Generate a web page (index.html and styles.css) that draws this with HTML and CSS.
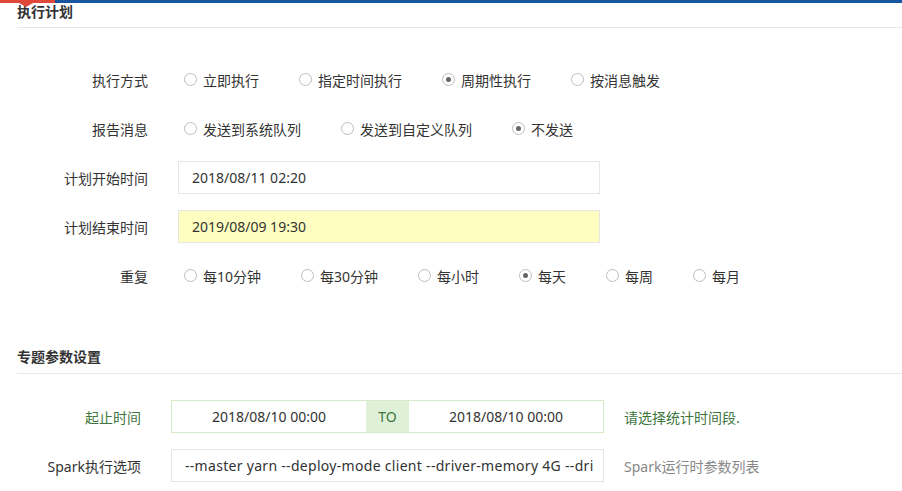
FILE: index.html
```html
<!DOCTYPE html>
<html lang="zh-CN">
<head>
<meta charset="utf-8">
<title>执行计划</title>
<link rel="stylesheet" href="styles.css">
</head>
<body>
<div class="topbar"><span class="topbar-active"></span></div>

<h2 class="section-title first">执行计划</h2>

<div class="form form-plan">
  <div class="row">
    <div class="label">执行方式</div>
    <div class="radios">
      <span class="radio"><span class="dot"></span>立即执行</span>
      <span class="radio"><span class="dot"></span>指定时间执行</span>
      <span class="radio"><span class="dot checked"></span>周期性执行</span>
      <span class="radio"><span class="dot"></span>按消息触发</span>
    </div>
  </div>
  <div class="row">
    <div class="label">报告消息</div>
    <div class="radios">
      <span class="radio"><span class="dot"></span>发送到系统队列</span>
      <span class="radio"><span class="dot"></span>发送到自定义队列</span>
      <span class="radio"><span class="dot checked"></span>不发送</span>
    </div>
  </div>
  <div class="row">
    <div class="label">计划开始时间</div>
    <div class="input">2018/08/11 02:20</div>
  </div>
  <div class="row">
    <div class="label">计划结束时间</div>
    <div class="input input-yellow">2019/08/09 19:30</div>
  </div>
  <div class="row">
    <div class="label">重复</div>
    <div class="radios">
      <span class="radio"><span class="dot"></span>每10分钟</span>
      <span class="radio"><span class="dot"></span>每30分钟</span>
      <span class="radio"><span class="dot"></span>每小时</span>
      <span class="radio"><span class="dot checked"></span>每天</span>
      <span class="radio"><span class="dot"></span>每周</span>
      <span class="radio"><span class="dot"></span>每月</span>
    </div>
  </div>
</div>

<h2 class="section-title second">专题参数设置</h2>

<div class="form form-param">
  <div class="row">
    <div class="label label-success">起止时间</div>
    <div class="range">
      <span class="range-field">2018/08/10 00:00</span>
      <span class="range-to">TO</span>
      <span class="range-field">2018/08/10 00:00</span>
    </div>
    <div class="help help-success">请选择统计时间段.</div>
  </div>
  <div class="row">
    <div class="label">Spark执行选项</div>
    <div class="input input-wide">--master yarn --deploy-mode client --driver-memory 4G --dri</div>
    <div class="help">Spark运行时参数列表</div>
  </div>
</div>
</body>
</html>
```

FILE: styles.css
```css
html, body {
  margin: 0;
  padding: 0;
  background: #fff;
}
body {
  font-family: "Noto Sans", "Noto Sans CJK SC", sans-serif;
  font-size: 14px;
  color: #333;
  width: 902px;
  height: 491px;
  overflow: hidden;
}
.topbar {
  position: relative;
  height: 3px;
  background: #1855a0;
}
.topbar-active {
  position: absolute;
  left: 0;
  top: 0;
  width: 55px;
  height: 3px;
  background: #e0493a;
}
.topbar-active::after {
  content: "";
  position: absolute;
  left: 19px;
  top: 3px;
  border-left: 7px solid transparent;
  border-right: 7px solid transparent;
  border-top: 4px solid #e0493a;
}
.section-title {
  margin: 0 0 0 17px;
  font-size: 14px;
  font-weight: bold;
  line-height: 18px;
  color: #333;
  border-bottom: 1px solid #e8e8e8;
}
.section-title.first {
  padding: 0 0 6px 0;
}
.section-title.second {
  margin-top: 56px;
  padding: 0 0 7px 0;
}
.form {
  display: flex;
  flex-direction: column;
  gap: 16px;
}
.form-plan {
  margin-top: 35px;
}
.form-param {
  margin-top: 26px;
}
.row {
  display: flex;
  align-items: center;
  height: 33px;
}
.label {
  width: 148px;
  text-align: right;
  flex: none;
  white-space: nowrap;
}
.form-plan .label {
  margin-right: 30px;
}
.form-param .label {
  width: 141px;
  margin-right: 30px;
}
.label-success {
  color: #3c763d;
}
.radios {
  display: flex;
  align-items: center;
  padding-left: 6px;
}
.radio {
  display: inline-flex;
  align-items: center;
  margin-right: 40px;
  white-space: nowrap;
}
.dot {
  box-sizing: border-box;
  width: 13px;
  height: 13px;
  border: 1px solid #bdbdbd;
  border-radius: 50%;
  margin-right: 6px;
  display: inline-flex;
  align-items: center;
  justify-content: center;
  background: #fff;
}
.dot.checked::after {
  content: "";
  width: 5px;
  height: 5px;
  border-radius: 50%;
  background: #666;
}
.input {
  box-sizing: border-box;
  width: 422px;
  height: 33px;
  border: 1px solid #e6e6e6;
  padding: 0 13px;
  line-height: 31px;
  white-space: nowrap;
  overflow: hidden;
  background: #fff;
}
.input-yellow {
  background: #fefec0;
}
.input-wide {
  width: 433px;
  letter-spacing: 0.3px;
}
.range {
  box-sizing: border-box;
  display: flex;
  width: 433px;
  height: 33px;
  border: 1px solid #d6e9c6;
}
.range-field {
  flex: 1;
  text-align: center;
  line-height: 31px;
}
.range-to {
  width: 43px;
  flex: none;
  background: #dff0d8;
  color: #3c763d;
  text-align: center;
  line-height: 31px;
}
.help {
  margin-left: 20px;
  color: #888;
  white-space: nowrap;
}
.help-success {
  color: #3c763d;
}
```
